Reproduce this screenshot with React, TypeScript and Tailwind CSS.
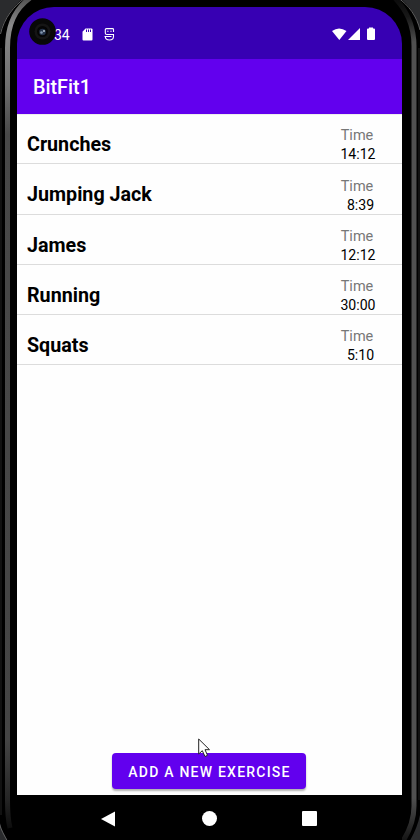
const exercises = [
  { name: "Crunches", time: "14:12" },
  { name: "Jumping Jack", time: "8:39" },
  { name: "James", time: "12:12" },
  { name: "Running", time: "30:00" },
  { name: "Squats", time: "5:10" },
];

function Bezel() {
  return (
    <svg className="absolute inset-0" width="420" height="840" viewBox="0 0 420 840" fill="none">
      <defs>
        <linearGradient id="rimLeft" x1="0" y1="0" x2="0" y2="840" gradientUnits="userSpaceOnUse">
          <stop offset="0" stopColor="#555" />
          <stop offset="0.03" stopColor="#8a8a8a" />
          <stop offset="0.1" stopColor="#707070" />
          <stop offset="0.16" stopColor="#484848" />
          <stop offset="0.88" stopColor="#444" />
          <stop offset="0.95" stopColor="#262626" />
          <stop offset="0.99" stopColor="#0a0a0a" />
        </linearGradient>
        <linearGradient id="rimRight" x1="0" y1="0" x2="0" y2="840" gradientUnits="userSpaceOnUse">
          <stop offset="0" stopColor="#0c0c0c" />
          <stop offset="0.02" stopColor="#181818" />
          <stop offset="0.05" stopColor="#505050" />
          <stop offset="0.95" stopColor="#505050" />
          <stop offset="1" stopColor="#151515" />
        </linearGradient>
      </defs>
      <rect width="420" height="840" fill="#2a2b2d" />
      <path d="M0 33C4 18 14 5 26-4H397C409 4 417 16 420 30V815C418 825 414 834 408 844H9C5 836 1 829 0 823Z" fill="#000" />
      <path d="M.5 34C4 18 14 6 25-2M398-2C409 5 417 17 420 30M-.5 824C1 830 4 835 8 842" stroke="#606060" />
      <path d="M1 48V815M419 48V800" stroke="#222" />
      <path d="M30-2C15 9 7.500 24 7.500 48V800C7.500 810 8 820 10 828" stroke="url(#rimLeft)" strokeWidth="5" />
      <path d="M395-2C406 10 414 24 414 46V806C414 818 410 830 403 841" stroke="url(#rimRight)" strokeWidth="5" />
    </svg>
  );
}

function StatusBar() {
  return (
    <header className="relative flex h-[52px] shrink-0 items-center rounded-t-[37px] bg-[#3700b3] text-white">
      <span className="ml-[37px] mt-[3px] w-[16px] text-[14px] leading-4">34</span>
      <svg className="ml-[12px] mt-[2px]" width="11" height="13" viewBox="0 0 11 13">
        <path d="M3.500.5H9.500Q10.500.5 10.500 1.500V11.500Q10.500 12.500 9.500 12.500H1.500Q.5 12.500.5 11.500V3.800Z" fill="#fff" />
        <path d="M4.500 1.500V4M6.500 1.500V4M8.500 1.500V4" stroke="#3700b3" />
      </svg>
      <svg className="ml-[11px] mt-[2px]" width="11" height="13" viewBox="0 0 11 13" fill="none" stroke="#fff" strokeWidth="1.100">
        <path d="M9.500 4V1.500Q9.500.6 8.500.6H2.500Q1.300.6 1.300 1.800V5Q1.300 6.500 2.800 6.500H10" />
        <path d="M.5 8.500H7.500M9.500 6.500V8.500Q9.500 12 5.500 12Q1.300 12 1.300 8.500M3.200 3.300H4.500M6.300 3.300H7.600" />
      </svg>
      <svg className="ml-auto mr-[26px] mt-px" width="44" height="14" viewBox="0 0 44 14" fill="#fff">
        <path d="M0 4Q7-1 14.500 4L7.300 13Z" />
        <path d="M16 13L28 1V13Z" />
        <path d="M37 1.500V.5H41V1.500H42Q43 1.500 43 2.500V12Q43 13 42 13H36Q35 13 35 12V2.500Q35 1.500 36 1.500Z" />
      </svg>
      <svg className="absolute left-[12px] top-[11px]" width="28" height="28" viewBox="0 0 28 28">
        <circle cx="13.500" cy="13.500" r="13.300" fill="#080808" />
        <circle cx="13.500" cy="13.500" r="8" fill="#151515" />
        <circle cx="13.500" cy="13.500" r="5.500" fill="#050505" />
        <circle cx="13.500" cy="14" r="3.300" fill="#26344b" />
        <circle cx="12.500" cy="14.500" r="1.300" fill="#8196af" />
        <circle cx="15" cy="13" r=".9" fill="#c7d2df" />
      </svg>
    </header>
  );
}

export default function App() {
  return (
    <div className="relative h-[840px] w-[420px] overflow-hidden font-['Roboto',sans-serif]">
      <Bezel />
      <div className="relative ml-[17px] flex h-full w-[385px] flex-col pt-[7px]">
        <StatusBar />
        <div className="flex h-[55px] shrink-0 items-center bg-[#6200ee] pl-4 text-[19.800px] font-medium text-white">
          <h1 className="pt-[2px] leading-6">BitFit1</h1>
        </div>
        <main className="flex h-[681px] shrink-0 flex-col bg-[#fefefe] shadow-[inset_0_1px_0_#eeeeee]">
          <ul>
            {exercises.map((item) => (
              <li key={item.name} className="flex h-[50.25px] justify-between border-b border-[#dcdcdc] pl-[10px] pr-[26px]">
                <span className="pt-[19px] text-[19.700px] font-bold leading-6 text-black">{item.name}</span>
                <div className="flex w-[36px] flex-col pt-[12.250px] text-center">
                  <span className="-ml-[2px] text-[14.500px] leading-[19px] text-[#777]">Time</span>
                  <span className={item.time.length === 4 ? "pl-[5px] text-[14.100px] leading-[19px] text-black" : "text-[14.100px] leading-[19px] text-black"}>{item.time}</span>
                </div>
              </li>
            ))}
          </ul>
          <button className="mb-[6px] ml-[95px] mt-auto h-[36px] w-[194px] rounded-[4px] bg-[#6200ee] pl-px pt-[2px] text-[14px] font-medium tracking-[1.220px] text-white shadow-[0_2px_2px_rgba(0,0,0,0.3)]">
            ADD A NEW EXERCISE
          </button>
        </main>
        <nav className="flex h-[45px] items-center bg-black pt-[2px]">
          <svg className="ml-[84px]" width="14" height="16" viewBox="0 0 14 16"><path d="M14 .5V15.500L0 8Z" fill="#fff" /></svg>
          <span className="ml-[87px] h-[15px] w-[15px] rounded-full bg-white" />
          <span className="ml-[85px] h-[15px] w-[15px] rounded-[1px] bg-white" />
        </nav>
      </div>
      <svg className="absolute left-[198px] top-[738px]" width="13" height="20" viewBox="0 0 13 20">
        <path d="M.7 1V16L4.300 12.700L7 18.500L9.500 17.300L7 11.700H11.500Z" fill="#fff" stroke="#222" />
      </svg>
    </div>
  );
}
